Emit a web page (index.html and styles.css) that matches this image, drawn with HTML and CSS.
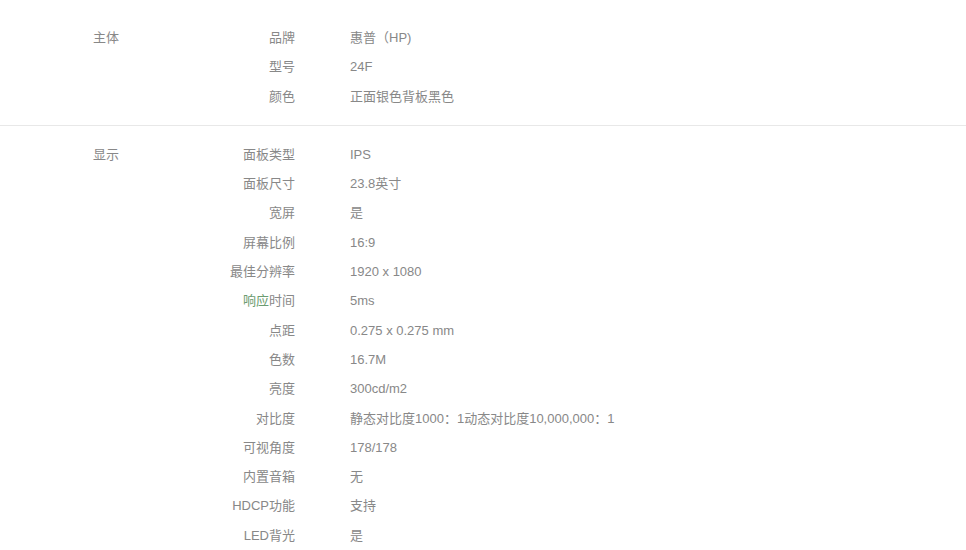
FILE: index.html
```html
<!DOCTYPE html>
<html lang="zh-CN">
<head>
    <meta charset="UTF-8">
    <title>规格参数</title>
    <link rel="stylesheet" href="styles.css">
</head>
<body>

    <!-- 主体 -->
    <div class="spec-group">
        <div class="group-title">主体</div>
        <dl class="spec-list">
            <dt>品牌</dt><dd>惠普（HP)</dd>
            <dt>型号</dt><dd>24F</dd>
            <dt>颜色</dt><dd>正面银色背板黑色</dd>
        </dl>
    </div>

    <!-- 显示 -->
    <div class="spec-group">
        <div class="group-title">显示</div>
        <dl class="spec-list">
            <dt>面板类型</dt><dd>IPS</dd>
            <dt>面板尺寸</dt><dd>23.8英寸</dd>
            <dt>宽屏</dt><dd>是</dd>
            <dt>屏幕比例</dt><dd>16:9</dd>
            <dt>最佳分辨率</dt><dd>1920 x 1080</dd>
            <dt><span class="hl">响应</span>时间</dt><dd>5ms</dd>
            <dt>点距</dt><dd>0.275 x 0.275 mm</dd>
            <dt>色数</dt><dd>16.7M</dd>
            <dt>亮度</dt><dd>300cd/m2</dd>
            <dt>对比度</dt><dd>静态对比度1000：1动态对比度10,000,000：1</dd>
            <dt>可视角度</dt><dd>178/178</dd>
            <dt>内置音箱</dt><dd>无</dd>
            <dt>HDCP功能</dt><dd>支持</dd>
            <dt>LED背光</dt><dd>是</dd>
        </dl>
    </div>

</body>
</html>
```

FILE: styles.css
```css
body {
    font-family: "Liberation Sans", "Noto Sans CJK SC", sans-serif;
    font-size: 13px;
    color: #888;
    background-color: #fff;
    margin: 0;
    padding-top: 9px;
}

.spec-group {
    display: flex;
    padding: 14px 0 14px 93px;
    border-bottom: 1px solid #e8e8e8;
}

.spec-group:last-child {
    border-bottom: none;
}

.group-title {
    width: 80px;
    line-height: 29.3px;
}

.spec-list {
    display: grid;
    grid-template-columns: 122px auto;
    column-gap: 55px;
    margin: 0;
    line-height: 29.3px;
}

.spec-list dt {
    text-align: right;
}

.spec-list dd {
    margin: 0;
}

.hl {
    color: #6c9c70;
}
```
